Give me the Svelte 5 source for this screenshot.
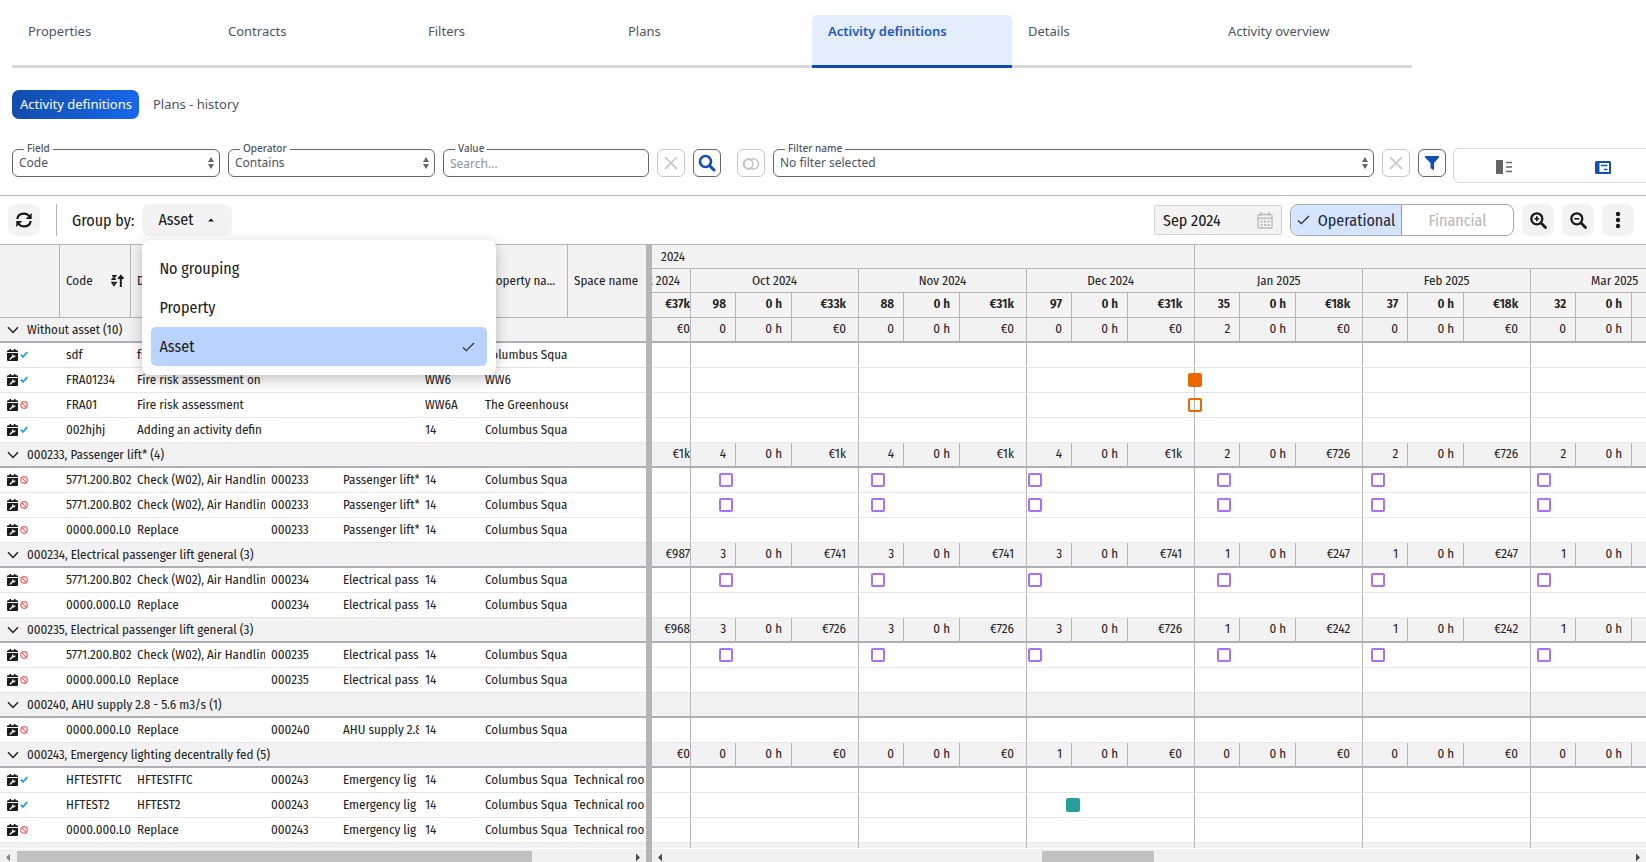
<script>
  const tabs = ['Properties', 'Contracts', 'Filters', 'Plans', 'Activity definitions', 'Details', 'Activity overview'];
  const months = ['Oct 2024', 'Nov 2024', 'Dec 2024', 'Jan 2025', 'Feb 2025', 'Mar 2025'];
  const totals = {
    first: '€37k',
    cells: [['98', '€33k'], ['88', '€31k'], ['97', '€31k'], ['35', '€18k'], ['37', '€18k'], ['32', '']]
  };
  const monthly = [
    { month: 0, left: 28 },
    { month: 1, left: 12 },
    { month: 2, left: 1 },
    { month: 3, left: 22 },
    { month: 4, left: 8 },
    { month: 5, left: 6 }
  ].map((m) => ({ ...m, kind: 'violet' }));

  const sum = (first, counts, costs) => ({ first, cells: counts.map((c, i) => [c, costs[i]]) });

  const groups = [
    {
      name: 'Without asset (10)',
      sums: sum('€0', [0, 0, 0, 2, 0, 0], ['€0', '€0', '€0', '€0', '€0', '']),
      rows: [
        { ok: true, cells: ['sdf', 'fsd', '', '', '', 'Columbus Squa', ''], marks: [] },
        { ok: true, cells: ['FRA01234', 'Fire risk assessment on', '', '', 'WW6', 'WW6', ''], marks: [{ month: 3, left: -7, kind: 'orange solid' }] },
        { ok: false, cells: ['FRA01', 'Fire risk assessment', '', '', 'WW6A', 'The Greenhouse', ''], marks: [{ month: 3, left: -7, kind: 'orange' }] },
        { ok: true, cells: ['002hjhj', 'Adding an activity defin', '', '', '14', 'Columbus Squa', ''], marks: [] }
      ]
    },
    {
      name: '000233, Passenger lift* (4)',
      sums: sum('€1k', [4, 4, 4, 2, 2, 2], ['€1k', '€1k', '€1k', '€726', '€726', '']),
      rows: [
        { ok: false, cells: ['5771.200.B02', 'Check (W02), Air Handlin', '000233', 'Passenger lift*', '14', 'Columbus Squa', ''], marks: monthly },
        { ok: false, cells: ['5771.200.B02', 'Check (W02), Air Handlin', '000233', 'Passenger lift*', '14', 'Columbus Squa', ''], marks: monthly },
        { ok: false, cells: ['0000.000.L0', 'Replace', '000233', 'Passenger lift*', '14', 'Columbus Squa', ''], marks: [] }
      ]
    },
    {
      name: '000234, Electrical passenger lift general (3)',
      sums: sum('€987', [3, 3, 3, 1, 1, 1], ['€741', '€741', '€741', '€247', '€247', '']),
      rows: [
        { ok: false, cells: ['5771.200.B02', 'Check (W02), Air Handlin', '000234', 'Electrical pass', '14', 'Columbus Squa', ''], marks: monthly },
        { ok: false, cells: ['0000.000.L0', 'Replace', '000234', 'Electrical pass', '14', 'Columbus Squa', ''], marks: [] }
      ]
    },
    {
      name: '000235, Electrical passenger lift general (3)',
      sums: sum('€968', [3, 3, 3, 1, 1, 1], ['€726', '€726', '€726', '€242', '€242', '']),
      rows: [
        { ok: false, cells: ['5771.200.B02', 'Check (W02), Air Handlin', '000235', 'Electrical pass', '14', 'Columbus Squa', ''], marks: monthly },
        { ok: false, cells: ['0000.000.L0', 'Replace', '000235', 'Electrical pass', '14', 'Columbus Squa', ''], marks: [] }
      ]
    },
    {
      name: '000240, AHU supply 2.8 - 5.6 m3/s (1)',
      sums: null,
      rows: [{ ok: false, cells: ['0000.000.L0', 'Replace', '000240', 'AHU supply 2.8', '14', 'Columbus Squa', ''], marks: [] }]
    },
    {
      name: '000243, Emergency lighting decentrally fed (5)',
      sums: sum('€0', [0, 0, 1, 0, 0, 0], ['€0', '€0', '€0', '€0', '€0', '']),
      rows: [
        { ok: true, cells: ['HFTESTFTC', 'HFTESTFTC', '000243', 'Emergency lig', '14', 'Columbus Squa', 'Technical roo'], marks: [] },
        { ok: true, cells: ['HFTEST2', 'HFTEST2', '000243', 'Emergency lig', '14', 'Columbus Squa', 'Technical roo'], marks: [{ month: 2, left: 39, kind: 'teal solid' }] },
        { ok: false, cells: ['0000.000.L0', 'Replace', '000243', 'Emergency lig', '14', 'Columbus Squa', 'Technical roo'], marks: [] }
      ]
    }
  ];

  const scrollbars = { list: { start: 0, size: 515 }, time: { start: 373, size: 112 } };
</script>

{#snippet updown()}
  <svg class="updown" width="8" height="14" viewBox="0 0 8 14" aria-hidden="true"><path d="M4 1 7 6H1zM4 13 1 8h6z" fill="#666" /></svg>
{/snippet}

{#snippet cross()}
  <svg width="14" height="14" viewBox="0 0 14 14" aria-hidden="true"><path d="M1.500 1.500 12.500 12.500M12.500 1.500 1.500 12.500" stroke="#c4c4c4" stroke-width="1.600" stroke-linecap="round" fill="none" /></svg>
{/snippet}

{#snippet tick(color)}
  <svg width="13" height="10" viewBox="0 0 13 10" aria-hidden="true"><path d="M1 5.500 4.300 8.600 12 1" stroke={color} stroke-width="1.300" fill="none" /></svg>
{/snippet}

<div class="page">
  <nav class="tabs">
    {#each tabs as t}
      <a href="#top" class:active={t === 'Activity definitions'}>{t}</a>
    {/each}
  </nav>

  <nav class="subtabs">
    <a href="#top" class="pill">Activity definitions</a>
    <a href="#top">Plans - history</a>
  </nav>

  <div class="filters">
    <div class="field">
      <label for="f-field">Field</label>
      <select id="f-field"><option>Code</option></select>
      {@render updown()}
    </div>
    <div class="field">
      <label for="f-op">Operator</label>
      <select id="f-op"><option>Contains</option></select>
      {@render updown()}
    </div>
    <div class="field">
      <label for="f-val">Value</label>
      <input id="f-val" type="text" placeholder="Search..." />
    </div>
    <button class="sq off" aria-label="Clear search">{@render cross()}</button>
    <button class="sq" aria-label="Search">
      <svg width="18" height="18" viewBox="0 0 18 18" aria-hidden="true"><circle cx="7.500" cy="7.500" r="5.500" fill="none" stroke="#124fb4" stroke-width="2.600" /><path d="M11.500 11.500 16 16" stroke="#124fb4" stroke-width="3" stroke-linecap="round" /></svg>
    </button>
    <button class="sq off toggle" aria-label="Toggle">
      <svg width="18" height="14" viewBox="0 0 18 14" aria-hidden="true"><rect x="1.500" y="3" width="15" height="10" rx="5" fill="none" stroke="#c4c4c4" stroke-width="1.600" /><circle cx="6.500" cy="8" r="4.500" fill="none" stroke="#c4c4c4" stroke-width="1.600" /></svg>
    </button>
    <div class="field">
      <label for="f-name">Filter name</label>
      <select id="f-name"><option>No filter selected</option></select>
      {@render updown()}
    </div>
    <button class="sq off" aria-label="Clear filter">{@render cross()}</button>
    <button class="sq" aria-label="Filter">
      <svg width="16" height="16" viewBox="0 0 16 16" aria-hidden="true"><path d="M1 1h14v1.500L10 8v7.500L6.500 13V8L1 2.500z" fill="#124fb4" /></svg>
    </button>
    <div class="views">
      <button aria-label="List view">
        <svg width="16" height="14" viewBox="0 0 16 14" aria-hidden="true"><path d="M0 0h7v14H0z" fill="#666" /><path d="M10 2.500h6M10 7h6M10 11.500h6" stroke="#666" stroke-width="1.700" /></svg>
      </button>
      <button aria-label="Card view">
        <svg width="16" height="13" viewBox="0 0 16 13" aria-hidden="true"><rect width="16" height="13" rx="1.500" fill="#124fb4" /><rect x="4.500" y="2" width="9.500" height="9" fill="#fff" /><path d="M6 4.500h6.500M9 8.500h3.500" stroke="#124fb4" stroke-width="1.500" /></svg>
      </button>
    </div>
  </div>

  <div class="toolbar">
    <button class="ib" aria-label="Refresh">
      <svg width="16" height="16" viewBox="0 0 16 16" aria-hidden="true"><g fill="none" stroke="#1a1a1a" stroke-width="2.200"><path d="M1.300 7C1.800 3.800 4.500 1.600 8 1.600c2.300 0 4 .9 5.300 2.600" /><path d="M14.700 9c-.5 3.200-3.200 5.400-6.700 5.400-2.300 0-4-.9-5.300-2.600" /></g><path d="M15.700 1v6H9.700zM.3 15V9h6z" fill="#1a1a1a" /></svg>
    </button>
    <span class="sep"></span>
    <span class="lbl">Group by:</span>
    <div class="group">
      <button class="gb">Asset <svg width="6" height="4" viewBox="0 0 6 4" aria-hidden="true"><path d="M0 3.500 3 .5l3 3z" fill="#1a1a1a" /></svg></button>
      <div class="menu" role="menu">
        <button role="menuitem">No grouping</button>
        <button role="menuitem">Property</button>
        <button role="menuitem" class="sel">Asset {@render tick('#333')}</button>
      </div>
    </div>
    <div class="date">
      <input type="text" value="Sep 2024" aria-label="Start month" />
      <svg width="16" height="17" viewBox="0 0 16 17" aria-hidden="true"><g fill="none" stroke="#b9b9b9" stroke-width="1.300"><rect x="1" y="2.500" width="14" height="13.500" rx="1" /><path d="M1 6.200h14M4 0v4M12 0v4" /></g><path d="M3.500 8.500h2v2h-2zM7 8.500h2v2H7zM10.500 8.500h2v2h-2zM3.500 12h2v2h-2zM7 12h2v2H7zM10.500 12h2v2h-2z" fill="#b9b9b9" /></svg>
    </div>
    <div class="seg">
      <button class="on">{@render tick('#1f2937')} Operational</button>
      <button>Financial</button>
    </div>
    <button class="ib" aria-label="Zoom in">
      <svg width="17" height="17" viewBox="0 0 17 17" aria-hidden="true"><circle cx="6.800" cy="6.800" r="5.500" fill="none" stroke="#1a1a1a" stroke-width="2.300" /><path d="M11 11l4.500 4.500" stroke="#1a1a1a" stroke-width="2.800" stroke-linecap="round" /><path d="M4.300 6.800h5M6.800 4.300v5" stroke="#1a1a1a" stroke-width="1.600" /></svg>
    </button>
    <button class="ib" aria-label="Zoom out">
      <svg width="17" height="17" viewBox="0 0 17 17" aria-hidden="true"><circle cx="6.800" cy="6.800" r="5.500" fill="none" stroke="#1a1a1a" stroke-width="2.300" /><path d="M11 11l4.500 4.500" stroke="#1a1a1a" stroke-width="2.800" stroke-linecap="round" /><path d="M4.300 6.800h5" stroke="#1a1a1a" stroke-width="1.600" /></svg>
    </button>
    <button class="ib" aria-label="More">
      <svg width="6" height="18" viewBox="0 0 6 18" aria-hidden="true"><g fill="#1a1a1a"><circle cx="3" cy="3" r="2.200" /><circle cx="3" cy="9" r="2.200" /><circle cx="3" cy="15" r="2.200" /></g></svg>
    </button>
  </div>

  <div class="split">
    <section class="pane list">
      <div class="scroll">
        <table>
          <colgroup><col style="width:60px" /><col style="width:71px" /><col style="width:134px" /><col style="width:72px" /><col style="width:82px" /><col style="width:60px" /><col style="width:89px" /><col /></colgroup>
          <thead>
            <tr>
              <th></th>
              <th>
                <div class="code">Code
                  <svg width="13" height="14" viewBox="0 0 13 14" aria-hidden="true"><g fill="none" stroke="#1a1a1a" stroke-width="1.500"><path d="M1 1.800h3.500L1.500 5.200H5M1 8.500h4L3 11.500z" /><path d="M9.800 13V2M7.200 4.800l2.600-2.800 2.600 2.800" stroke-width="1.900" /></g></svg>
                </div>
              </th>
              <th>Description</th><th>Asset</th><th>Asset name</th><th>Prop...</th><th>Property na...</th><th>Space name</th>
            </tr>
          </thead>
          <tbody>
            {#each groups as g}
              <tr class="grp">
                <td colspan="8">
                  <button>
                    <svg width="12" height="8" viewBox="0 0 12 8" aria-hidden="true"><path d="M1 1.200 6 6.400l5-5.200" fill="none" stroke="#222" stroke-width="1.500" /></svg>
                    {g.name}
                  </button>
                </td>
              </tr>
              {#each g.rows as r}
                <tr>
                  <td>
                    <div class="icons">
                      <svg width="11" height="12" viewBox="0 0 11 12" aria-hidden="true"><path d="M1.200 1.200h1.300V0h1.600v1.200h2.800V0h1.600v1.200h1.300q1.200 0 1.200 1V3H0v-.8q0-1 1.200-1zM0 3.900h11v7q0 1.100-1 1.100H1q-1 0-1-1.100z" fill="#1a1a1a" /><path d="M3.200 10 5.800 7.500" stroke="#fff" stroke-width="1.400" stroke-linecap="round" /><path d="M8.300 5.900a1.700 1.700 0 1 1-2-.9v1.400l1 .5z" fill="#fff" /></svg>
                      {#if r.ok}
                        <svg width="8" height="8" viewBox="0 0 8 8" aria-hidden="true"><path d="M.8 3.600 3 5.800 7.300 1.200" fill="none" stroke="#2b9cf5" stroke-width="1.900" /></svg>
                      {:else}
                        <svg width="8" height="8" viewBox="0 0 8 8" aria-hidden="true"><circle cx="4" cy="4" r="3.300" fill="none" stroke="#f8605c" stroke-width="1.200" /><path d="M1.700 1.700l4.600 4.600" stroke="#f8605c" stroke-width="1.200" /></svg>
                      {/if}
                    </div>
                  </td>
                  {#each r.cells as c}<td>{c}</td>{/each}
                </tr>
              {/each}
            {/each}
            <tr class="grp next"><td colspan="8"></td></tr>
          </tbody>
        </table>
      </div>
      <div class="bar">
        <svg width="17" height="17" viewBox="0 0 17 17" aria-hidden="true"><path d="M10 4.500v8L6 8.500z" fill="#8a8a8a" /></svg>
        <div class="track"><span style="width:{scrollbars.list.size}px"></span></div>
        <svg width="17" height="17" viewBox="0 0 17 17" aria-hidden="true"><path d="M7 4.500v8l4-4z" fill="#4a4a4a" /></svg>
      </div>
    </section>

    <div class="splitter"></div>

    <section class="pane time">
      <div class="scroll">
        <table>
          <colgroup>
            <col style="width:39px" />
            {#each months as m}<col style="width:45px" /><col style="width:56px" /><col style="width:67px" />{/each}
          </colgroup>
          <thead>
            <tr class="year"><th colspan="10">2024</th><th colspan="9"></th></tr>
            <tr class="month">
              <th><div class="cut">Sept 2024</div></th>
              {#each months as m}<th colspan="3">{m}</th>{/each}
            </tr>
            <tr class="num">
              <th>{totals.first}</th>
              {#each totals.cells as [n, c]}<th>{n}</th><th>0 h</th><th class="c">{c}</th>{/each}
            </tr>
          </thead>
          <tbody>
            {#each groups as g}
              {#if g.sums}
                <tr class="grp num">
                  <td>{g.sums.first}</td>
                  {#each g.sums.cells as [n, c]}<td>{n}</td><td>0 h</td><td class="c">{c}</td>{/each}
                </tr>
              {:else}
                <tr class="grp"><td></td>{#each months as m}<td colspan="3"></td>{/each}</tr>
              {/if}
              {#each g.rows as r}
                <tr>
                  <td></td>
                  {#each months as m, i}
                    <td colspan="3">
                      {#each r.marks.filter((k) => k.month === i) as k}<span class="mark {k.kind}" style="left:{k.left}px"></span>{/each}
                    </td>
                  {/each}
                </tr>
              {/each}
            {/each}
            <tr class="grp next"><td></td>{#each months as m}<td colspan="3"></td>{/each}</tr>
          </tbody>
        </table>
      </div>
      <div class="bar">
        <svg width="17" height="17" viewBox="0 0 17 17" aria-hidden="true"><path d="M10 4.500v8L6 8.500z" fill="#4a4a4a" /></svg>
        <div class="track"><span style="margin-left:{scrollbars.time.start}px;width:{scrollbars.time.size}px"></span></div>
        <svg width="17" height="17" viewBox="0 0 17 17" aria-hidden="true"><path d="M7 4.500v8l4-4z" fill="#4a4a4a" /></svg>
      </div>
    </section>
  </div>
</div>

<style>
  :global(body) { margin: 0; background: #fff; }
  .page {
    --ui: 'Noto Sans', 'Open Sans', sans-serif;
    --grid: 'Fira Sans Condensed', 'Roboto', sans-serif;
    --line: #b5b5b5;
    display: flex; flex-direction: column; height: 100vh; overflow: hidden;
    font-family: var(--ui); font-size: 13px; color: #4b5563;
  }
  button, input, select { font: inherit; color: inherit; margin: 0; }
  button { border: 0; padding: 0; background: none; display: flex; align-items: center; cursor: pointer; }
  a { color: inherit; text-decoration: none; }
  svg { display: block; flex: none; }
  * { box-sizing: border-box; }

  .tabs { display: flex; margin: 15px 0 0 12px; flex: none; }
  .tabs a { width: 200px; height: 53px; padding: 6px 16px; line-height: 20px; border-bottom: 3px solid #d8d8d8; }
  .tabs a.active { background: #e3edfc; color: #1b57c4; font-weight: 600; border-bottom-color: #124aa8; border-radius: 5px 5px 0 0; }

  .subtabs { display: flex; gap: 14px; margin: 22px 0 0 12px; flex: none; line-height: 28px; height: 29px; }
  .subtabs .pill { padding: 0 7px 0 8px; color: #fff; border-radius: 7px; background: linear-gradient(100deg, #124cab, #1868ec); }

  .filters {
    display: grid; grid-template-columns: 208px 207px 206px 28px 28px 36px minmax(0, 1fr) 28px 28px 192px;
    gap: 8px; margin: 30px 0 0 12px; flex: none; height: 46px; align-items: start; font-size: 12px;
  }
  .field { position: relative; height: 28px; }
  .field label { position: absolute; left: 12px; top: -7px; padding: 0 3px; background: #fff; font-size: 10px; line-height: 12px; font-weight: 500; }
  .field select, .field input { appearance: none; width: 100%; height: 28px; padding: 0 6px; border: 1px solid #666; border-radius: 6px; background: #fff; outline: 0; }
  .field select { padding-bottom: 2px; }
  .field input::placeholder { color: #8b919b; opacity: 1; }
  .updown { position: absolute; right: 5px; top: 7px; pointer-events: none; }
  .sq { width: 28px; height: 28px; justify-content: center; border: 1px solid #666; border-radius: 6px; }
  .sq.off { border-color: #c8c8c8; }
  .toggle { justify-self: end; }
  .views { display: grid; grid-template-columns: 1fr 1fr; height: 35px; margin: -1px -8px 0 -1px; border: 1px solid #d8d8d8; border-radius: 6px; }
  .views button { justify-content: center; padding-top: 3px; }

  .toolbar { display: flex; align-items: center; gap: 8px; flex: none; height: 49px; padding: 0 12px 0 8px; border-top: 1px solid var(--line); font-family: var(--grid); font-size: 16px; color: #1a1a1a; }
  .ib { width: 32px; height: 32px; border-radius: 8px; background: #f3f3f3; justify-content: center; }
  .sep { width: 1px; height: 32px; background: var(--line); margin: 0 7px 0 8px; }
  .group { position: relative; margin-right: auto; }
  .gb { height: 32px; padding: 0 18px 1px 16px; width: 90px; justify-content: space-between; border-radius: 8px; background: #f3f3f3; }
  .menu { position: absolute; z-index: 5; top: 36px; left: 0; width: 354px; padding: 9px; background: #fff; border-radius: 8px; box-shadow: 0 4px 14px rgba(0, 0, 0, 0.25); }
  .menu button { width: 100%; height: 39px; padding: 0 12px 0 8px; justify-content: space-between; border-radius: 5px; }
  .menu .sel { background: #bad3fd; }
  .date { display: flex; align-items: center; width: 128px; height: 30px; padding: 0 8px; border: 1px solid #d4d4d4; border-radius: 2px; background: #f3f3f3; }
  .date input { min-width: 0; flex: 1; border: 0; padding: 0; background: none; outline: 0; }
  .seg { display: flex; height: 32px; border: 1px solid #a8a8a8; border-radius: 8px; overflow: hidden; }
  .seg button { width: 111px; justify-content: center; gap: 8px; color: #b8b8b8; }
  .seg .on { background: #d5e4ff; color: #1f2937; border-right: 1px solid #999; }

  .split { display: flex; flex: 1; min-height: 0; border-top: 1px solid var(--line); font-family: var(--grid); font-size: 13px; color: #222; }
  .pane { display: flex; flex-direction: column; min-width: 0; }
  .list { width: 646px; flex: none; }
  .time { flex: 1; }
  .splitter { width: 6px; background: var(--line); flex: none; }
  .scroll { flex: 1; min-height: 0; overflow: hidden; }
  table { border-collapse: separate; border-spacing: 0; table-layout: fixed; }
  .list table { width: 646px; }
  .time table { width: 1047px; }
  th { font-weight: 400; text-align: left; padding: 0 6px 1px; background: #f3f3f3; border-right: 1px solid var(--line); border-bottom: 1px solid var(--line); white-space: nowrap; overflow: hidden; }
  td { height: 25px; padding: 0 0 0 6px; border-bottom: 1px solid #e6e6e6; white-space: nowrap; overflow: hidden; line-height: 22px; }
  .list th { height: 73px; }
  .list th:last-child { border-right: 0; }
  .code { display: flex; justify-content: space-between; align-items: center; }
  .grp td { background: #f2f2f2; border-bottom: 2px solid #aeaeb4; }
  .grp button { gap: 8px; padding: 0 1px; height: 22px; }
  .next td { border-bottom: 0; }
  .icons { display: flex; gap: 2px; align-items: center; padding-left: 1px; }

  .year th { height: 24px; padding-left: 9px; }
  .month th { height: 24px; text-align: center; }
  .month th:first-child { padding: 0 10px 1px 0; }
  .cut { display: flex; justify-content: flex-end; overflow: hidden; }
  .time td { position: relative; overflow: visible; border-right: 1px solid var(--line); line-height: 20px; }
  .num th, .num td { height: 25px; padding: 0 9px 2px 0; text-align: right; }
  .num th { font-weight: 600; line-height: 20px; padding-bottom: 3px; }
  .num .c { padding-right: 12px; }
  .num th:first-child, .num td:first-child { padding-right: 0; }

  .mark { position: absolute; top: 5px; width: 14px; height: 14px; border: 2px solid; border-radius: 2px; }
  .violet { color: #a970ff; }
  .orange { color: #eb6700; }
  .teal { color: #259e9c; }
  .solid { background: currentColor; }

  .bar { display: flex; flex: none; height: 14px; overflow: hidden; align-items: flex-start; background: #f1f1f1; border-top: 1px solid #fff; }
  .track { flex: 1; padding-top: 2px; }
  .track span { display: block; height: 13px; background: #c1c1c1; }
</style>
